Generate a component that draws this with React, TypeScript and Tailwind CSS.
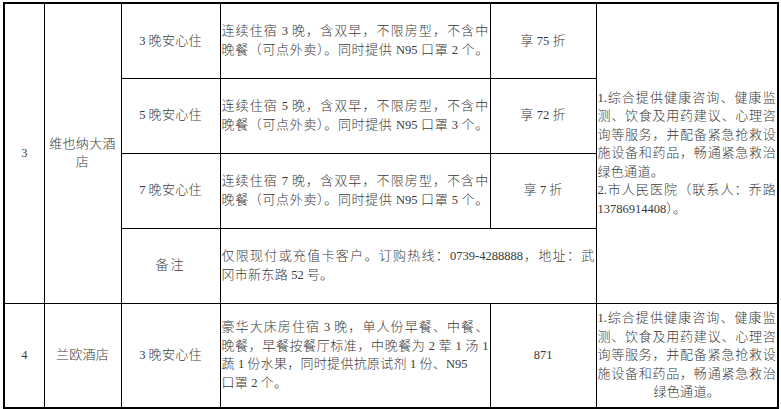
import type { ReactNode } from "react";

// Latin runs (digits, N95, spaces) are set smaller than the CJK glyphs
function Txt({ s }: { s: string }) {
  return (
    <>
      {s.split(/([\x20-\x7e]+)/).map((p, i) =>
        i % 2 === 1 ? (
          <span key={i} className="text-[12.5px] tracking-normal">
            {p}
          </span>
        ) : (
          p
        )
      )}
    </>
  );
}

// justified line
function J({ children }: { children: string }) {
  return (
    <div className="text-justify [text-align-last:justify]">
      <Txt s={children} />
    </div>
  );
}

// left line
function L({ children }: { children: string }) {
  return (
    <div className="text-left">
      <Txt s={children} />
    </div>
  );
}

// centered line
function C({ children }: { children: string }) {
  return (
    <div className="text-center">
      <Txt s={children} />
    </div>
  );
}

function Td({
  children,
  className = "",
  rowSpan,
  colSpan,
}: {
  children?: ReactNode;
  className?: string;
  rowSpan?: number;
  colSpan?: number;
}) {
  return (
    <td rowSpan={rowSpan} colSpan={colSpan} className={`border border-black px-px align-middle ${className}`}>
      {children}
    </td>
  );
}

export default function App() {
  return (
    <div className="min-h-[409px] w-[781px] bg-white pl-[3px] pt-[2px] font-['Liberation_Serif','Noto_Sans_CJK_SC',serif] text-[13px] font-light leading-[18.5px] tracking-[0.3px] text-[#3a3a3a]">
      <table className="w-[774px] table-fixed border-collapse border-2 border-black">
        <colgroup>
          <col className="w-[40px]" />
          <col className="w-[77px]" />
          <col className="w-[99px]" />
          <col className="w-[270px]" />
          <col className="w-[106px]" />
          <col className="w-[182px]" />
        </colgroup>
        <tbody>
          {/* 维也纳大酒店 */}
          <tr className="h-[75px]">
            <Td rowSpan={4} className="text-center">
              <Txt s="3" />
            </Td>
            <Td rowSpan={4} className="px-1 text-center">
              维也纳大酒店
            </Td>
            <Td className="text-center">
              <Txt s="3 晚安心住" />
            </Td>
            <Td>
              <J>连续住宿 3 晚，含双早，不限房型，不含中</J>
              <J>晚餐（可点外卖）。同时提供 N95 口罩 2 个。</J>
            </Td>
            <Td className="text-center">
              <Txt s="享 75 折" />
            </Td>
            <Td rowSpan={4}>
              <J>1.综合提供健康咨询、健康监</J>
              <J>测、饮食及用药建议、心理咨</J>
              <J>询等服务，并配备紧急抢救设</J>
              <J>施设备和药品，畅通紧急救治</J>
              <L>绿色通道。</L>
              <J>2.市人民医院（联系人：乔路</J>
              <L>13786914408）。</L>
            </Td>
          </tr>
          <tr className="h-[75px]">
            <Td className="text-center">
              <Txt s="5 晚安心住" />
            </Td>
            <Td>
              <J>连续住宿 5 晚，含双早，不限房型，不含中</J>
              <J>晚餐（可点外卖）。同时提供 N95 口罩 3 个。</J>
            </Td>
            <Td className="text-center">
              <Txt s="享 72 折" />
            </Td>
          </tr>
          <tr className="h-[75px]">
            <Td className="text-center">
              <Txt s="7 晚安心住" />
            </Td>
            <Td>
              <J>连续住宿 7 晚，含双早，不限房型，不含中</J>
              <J>晚餐（可点外卖）。同时提供 N95 口罩 5 个。</J>
            </Td>
            <Td className="text-center">
              <Txt s="享 7 折" />
            </Td>
          </tr>
          <tr className="h-[75px]">
            <Td className="text-center tracking-[2px]">备注</Td>
            <Td colSpan={2}>
              <J>仅限现付或充值卡客户。订购热线：0739-4288888，地址：武</J>
              <L>冈市新东路 52 号。</L>
            </Td>
          </tr>

          {/* 兰欧酒店 */}
          <tr className="h-[105px]">
            <Td className="text-center">
              <Txt s="4" />
            </Td>
            <Td className="text-center">兰欧酒店</Td>
            <Td className="text-center">
              <Txt s="3 晚安心住" />
            </Td>
            <Td>
              <J>豪华大床房住宿 3 晚，单人份早餐、中餐、</J>
              <J>晚餐，早餐按餐厅标准，中晚餐为 2 荤 1 汤 1</J>
              <L>蔬 1 份水果，同时提供抗原试剂 1 份、N95</L>
              <L>口罩 2 个。</L>
            </Td>
            <Td className="text-center">
              <Txt s="871" />
            </Td>
            <Td>
              <J>1.综合提供健康咨询、健康监</J>
              <J>测、饮食及用药建议、心理咨</J>
              <J>询等服务，并配备紧急抢救设</J>
              <J>施设备和药品，畅通紧急救治</J>
              <C>绿色通道。</C>
            </Td>
          </tr>
        </tbody>
      </table>
    </div>
  );
}
